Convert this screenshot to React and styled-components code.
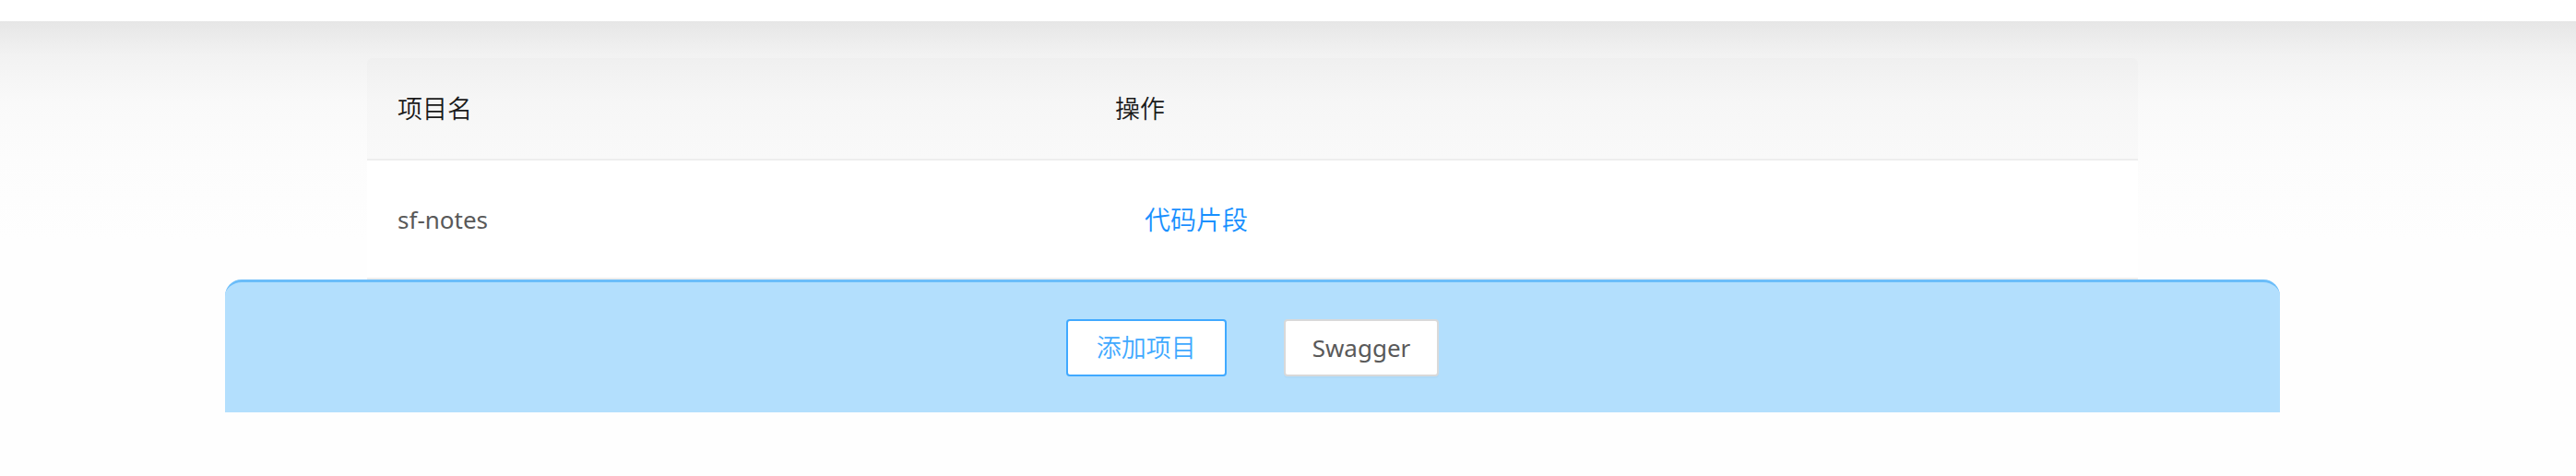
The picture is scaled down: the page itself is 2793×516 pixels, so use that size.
import React from "react";
import styled, { createGlobalStyle } from "styled-components";

const GlobalStyle = createGlobalStyle`
  html, body {
    margin: 0;
    padding: 0;
  }
  body {
    min-height: 516px;
    font-family: "Noto Sans", "Noto Sans CJK SC", sans-serif;
    background: linear-gradient(
      to bottom,
      #ffffff 0,
      #ffffff 23px,
      #e6e6e6 23px,
      #f2f2f2 60px,
      #f9f9f9 110px,
      #fcfcfc 170px,
      #fefefe 260px
    );
  }
`;

const Page = styled.div`
  padding: 63px 77px 0 0;
  display: flex;
  flex-direction: column;
  align-items: center;
`;

const Table = styled.div`
  width: 1920px;
  display: flex;
  flex-direction: column;
`;

const Row = styled.div`
  display: grid;
  grid-template-columns: 778px 1fr;
  align-items: center;
  height: ${({ head }) => (head ? "109px" : "127px")};
  background: ${({ head }) => (head ? "rgba(0, 0, 0, 0.01)" : "#ffffff")};
  border-bottom: 2px solid #eeeeee;
  border-radius: ${({ head }) => (head ? "5px 5px 0 0" : "0")};
`;

const Cell = styled.div`
  padding: 0 33px;
  font-size: ${({ head }) => (head ? "27px" : "26px")};
  line-height: 40px;
  font-weight: ${({ head }) => (head ? 350 : 400)};
  color: ${({ head }) => (head ? "#1a1a1a" : "#595959")};
  font-family: "Noto Sans", "Noto Sans CJK SC", sans-serif;
`;

const LinkButton = styled.a`
  display: inline-block;
  padding-left: 32px;
  font-size: 28px;
  line-height: 40px;
  font-weight: 350;
  color: #1890ff;
  cursor: pointer;
  font-family: "Noto Sans CJK SC", sans-serif;
`;

const Panel = styled.div`
  width: 2228px;
  height: 141px;
  box-sizing: content-box;
  background: #b3dffd;
  border-top: 3px solid #6bbdf9;
  border-radius: 18px 18px 0 0;
  display: flex;
  align-items: center;
  justify-content: center;
  gap: 62px;
`;

const Button = styled.button`
  height: 62px;
  box-sizing: border-box;
  padding: 0 29px;
  min-width: ${({ primary }) => (primary ? "174px" : "168px")};
  background: #ffffff;
  border: 2px solid ${({ primary }) => (primary ? "#40a9ff" : "#d9d9d9")};
  border-radius: 4px;
  color: ${({ primary }) => (primary ? "#40a9ff" : "#595959")};
  font-size: ${({ primary }) => (primary ? "27px" : "26px")};
  font-weight: ${({ primary }) => (primary ? 350 : 400)};
  font-family: "Noto Sans", "Noto Sans CJK SC", sans-serif;
  line-height: 1;
  cursor: pointer;
  box-shadow: ${({ primary }) =>
    primary ? "none" : "0 2px 0 rgba(0, 0, 0, 0.02)"};
`;

const projects = [{ name: "sf-notes" }];

const App = () => {
  return (
    <>
      <GlobalStyle />
      <Page>
        <Table>
          <Row head>
            <Cell head>项目名</Cell>
            <Cell head>操作</Cell>
          </Row>
          {projects.map((p) => (
            <Row key={p.name}>
              <Cell>{p.name}</Cell>
              <Cell>
                <LinkButton>代码片段</LinkButton>
              </Cell>
            </Row>
          ))}
        </Table>
        <Panel>
          <Button primary>添加项目</Button>
          <Button>Swagger</Button>
        </Panel>
      </Page>
    </>
  );
};

export default App;
